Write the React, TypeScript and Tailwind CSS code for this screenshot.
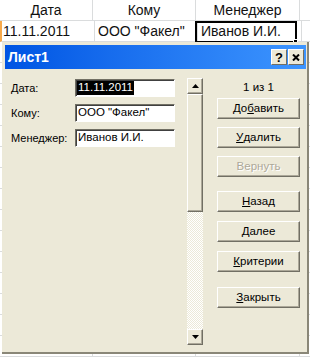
const sheetRows = Array.from({ length: 17 });

function Sheet() {
  return (
    <div className="flex flex-col font-['Liberation_Sans',Arial,sans-serif] text-[14px] text-[#111]">
      {sheetRows.map((_, i) => (
        <div
          key={i}
          className={`grid h-[21px] grid-cols-[93px_103px_104px_10px] border-b border-[#DADCDD] ${
            i === 1 ? 'border-l-2 border-l-[#F7A94B]' : ''
          }`}
        >
          <div className="border-r border-[#DADCDD] leading-[21px] px-[3px] text-center">
            {i === 0 ? 'Дата' : ''}
            {i === 1 && <div className="text-left -ml-[2px]">11.11.2011</div>}
          </div>
          <div className="border-r border-[#DADCDD] leading-[21px] px-[3px]">
            {i === 0 && <div className="text-center">Кому</div>}
            {i === 1 && 'ООО "Факел"'}
          </div>
          <div className="border-r border-[#DADCDD] leading-[21px] px-[3px]">
            {i === 0 && <div className="text-center">Менеджер</div>}
            {i === 1 && 'Иванов И.И.'}
          </div>
          <div />
        </div>
      ))}
    </div>
  );
}

function Btn({ children, disabled }: { children: React.ReactNode; disabled?: boolean }) {
  return (
    <div
      className={`flex h-[21px] w-[83px] items-center justify-center border border-t-white border-l-white border-r-[#716F64] border-b-[#716F64] bg-[#ECE9D8] shadow-[inset_-1px_-1px_0_#ACA899] text-[11.5px] ${
        disabled ? 'text-[#ACA899] [text-shadow:1px_1px_0_#fff]' : 'text-black'
      }`}
    >
      {children}
    </div>
  );
}

function U({ children }: { children: React.ReactNode }) {
  return <span className="underline underline-offset-[1px]">{children}</span>;
}

function Field({ label, value, selected }: { label: string; value: string; selected?: boolean }) {
  return (
    <div className="flex h-[18px] items-center">
      <div className="w-[64px] text-[11px] text-black">{label}</div>
      <div className="flex h-[18px] w-[100px] items-stretch border border-t-[#716F64] border-l-[#716F64] border-r-white border-b-white bg-white pl-[1px] py-[1px] shadow-[inset_1px_1px_0_#404040] text-[11.5px] text-black">
        <span className={`flex items-center px-[1px] ${selected ? 'bg-black text-white' : ''}`}>{value}</span>
      </div>
    </div>
  );
}

function Arrow({ down }: { down?: boolean }) {
  return (
    <div className="flex h-[16px] w-[16px] items-center justify-center border border-t-white border-l-white border-r-[#716F64] border-b-[#716F64] bg-[#ECE9D8] shadow-[inset_-1px_-1px_0_#ACA899]">
      <svg width="7" height="4" viewBox="0 0 7 4">
        {down ? <path d="M0 0h7L3.5 4z" fill="#000" /> : <path d="M0 4h7L3.5 0z" fill="#000" />}
      </svg>
    </div>
  );
}

export default function App() {
  return (
    <div className="relative h-[357px] w-[310px] overflow-hidden bg-white">
      <Sheet />

      {/* selected cell */}
      <div className="absolute left-[195px] top-[21px] h-[22px] w-[102px] border-2 border-black" />
      <div className="absolute left-[293px] top-[39px] h-[5px] w-[5px] bg-black border border-white" />

      {/* data form window */}
      <div className="absolute left-[2px] top-[42px] h-[312px] w-[307px] border-r-2 border-b-2 border-[#8A8778] bg-[#ECE9D8] pl-[3px] pr-[1px] pt-[3px] font-['Liberation_Sans',Arial,sans-serif]">
        <div className="flex h-[24px] items-center justify-between bg-linear-to-r from-[#0054E3] to-[#3D95FF] pl-[3px] pr-[2px]">
          <span className="text-[14px] font-bold text-white">Лист1</span>
          <div className="flex gap-[1px]">
            <div className="flex h-[16px] w-[16px] items-center justify-center border border-t-white border-l-white border-r-[#716F64] border-b-[#716F64] bg-[#ECE9D8] text-[13px] font-bold leading-none text-black">
              ?
            </div>
            <div className="flex h-[16px] w-[16px] items-center justify-center border border-t-white border-l-white border-r-[#716F64] border-b-[#716F64] bg-[#ECE9D8]">
              <svg width="8" height="7" viewBox="0 0 8 7">
                <path d="M1 0.5L7 6.5M7 0.5L1 6.5" stroke="#000" strokeWidth="2" />
              </svg>
            </div>
          </div>
        </div>

        <div className="flex items-start">
          <div className="ml-[6px] mt-[10px] flex flex-col gap-[7px]">
            <Field label="Дата:" value="11.11.2011" selected />
            <Field label="Кому:" value='ООО "Факел"' />
            <Field label="Менеджер:" value="Иванов И.И." />
          </div>

          <div className="ml-[12px] mt-[9px] flex h-[267px] w-[16px] flex-col">
            <Arrow />
            <div className="h-[118px] border border-t-white border-l-white border-r-[#716F64] border-b-[#716F64] bg-[#ECE9D8] shadow-[inset_-1px_-1px_0_#ACA899]" />
            <div className="flex-1 bg-[image:repeating-conic-gradient(#ECE9D8_0%_25%,#ffffff_0%_50%)] bg-[length:2px_2px]" />
            <Arrow down />
          </div>

          <div className="ml-[14px] mt-[9px] flex w-[83px] flex-col">
            <div className="h-[18px] text-center text-[11.5px] leading-[18px] text-black">1 из 1</div>
            <div className="mt-[2px]">
              <Btn>
                До<U>б</U>авить
              </Btn>
            </div>
            <div className="mt-[8px]">
              <Btn>
                <U>У</U>далить
              </Btn>
            </div>
            <div className="mt-[8px]">
              <Btn disabled>Вернуть</Btn>
            </div>
            <div className="mt-[14px]">
              <Btn>
                <U>Н</U>азад
              </Btn>
            </div>
            <div className="mt-[9px]">
              <Btn>
                <U>Д</U>алее
              </Btn>
            </div>
            <div className="mt-[9px]">
              <Btn>
                <U>К</U>ритерии
              </Btn>
            </div>
            <div className="mt-[15px]">
              <Btn>
                <U>З</U>акрыть
              </Btn>
            </div>
          </div>
        </div>
      </div>
    </div>
  );
}
